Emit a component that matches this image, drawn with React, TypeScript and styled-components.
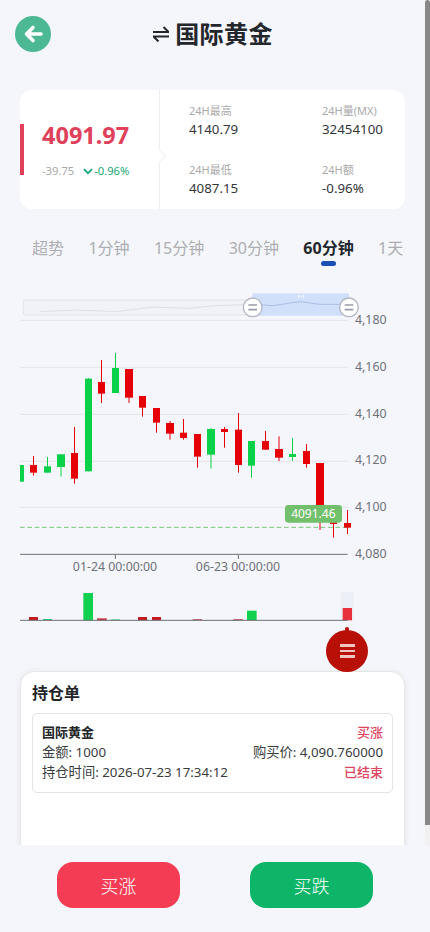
import React from "react";
import styled, { createGlobalStyle } from "styled-components";

const Global = createGlobalStyle`
  html, body { margin: 0; padding: 0; background: #f5f6fb; }
  * { box-sizing: border-box; }
  #root { width: 430px; height: 932px; overflow: hidden; }
`;

const Shell = styled.div`
  position: relative;
  width: 430px;
  height: 932px;
  overflow: hidden;
  background: #f5f6fb;
  color: #23262b;
  font-family: "Noto Sans", "Noto Sans CJK SC", sans-serif;
`;
const Page = styled.main`
  width: 425px;
  display: flex;
  flex-direction: column;
`;
const Header = styled.header`
  position: relative;
  height: 68px;
  margin-bottom: 22px;
  display: flex;
  justify-content: center;
  align-items: center;
`;
const BackButton = styled.button`
  position: absolute;
  left: 15px;
  top: 16px;
  width: 36px;
  height: 36px;
  padding: 0;
  border: 0;
  border-radius: 50%;
  background: #4cb894;
  display: flex;
  align-items: center;
  justify-content: center;
`;
const Title = styled.h1`
  margin: 0 0 0 1px;
  display: flex;
  align-items: center;
  gap: 6px;
  font-size: 24px;
  letter-spacing: 0.4px;
  line-height: 36px;
  font-weight: 700;
  color: #23262b;
`;
const PriceCard = styled.section`
  margin: 0 20px;
  height: 119px;
  background: #fff;
  border-radius: 12px;
  display: flex;
  overflow: hidden;
`;
const PricePane = styled.div`
  position: relative;
  width: 140px;
  flex: none;
  border-right: 1px solid #eeeeee;
  padding: 28px 0 0 22px;
  &::before {
    content: "";
    position: absolute;
    left: 0;
    top: 34px;
    width: 4px;
    height: 51px;
    background: #e0405a;
  }
  &::after {
    content: "";
    position: absolute;
    right: -5px;
    top: 61px;
    width: 9px;
    height: 9px;
    background: #fff;
    transform: rotate(45deg);
    border-top: 1px solid #f2f2f2;
    border-right: 1px solid #f2f2f2;
  }
`;
const BigPrice = styled.div`
  font-size: 23.5px;
  line-height: 34px;
  font-weight: 700;
  color: #e0405a;
`;
const ChangeRow = styled.div`
  margin-top: 11px;
  display: flex;
  align-items: center;
  font-size: 11.2px;
  line-height: 16px;
`;
const ChangeValue = styled.span`
  color: #aaaaaa;
  margin-right: 9px;
`;
const ChangePct = styled.span`
  display: flex;
  align-items: center;
  gap: 1px;
  color: #15a878;
`;
const StatsGrid = styled.div`
  flex: 1;
  display: grid;
  grid-template-columns: 133px 1fr;
  grid-auto-rows: 59px;
  padding: 12px 0 0 29px;
  overflow: hidden;
`;
const Stat = styled.div`
  display: flex;
  flex-direction: column;
`;
const StatLabel = styled.span`
  font-size: 11px;
  line-height: 18px;
  color: #aaaaaa;
`;
const StatValue = styled.span`
  font-size: 13.3px;
  line-height: 18px;
  color: #34363a;
`;
const Tabs = styled.nav`
  margin-top: 26px;
  padding-left: 32px;
  display: flex;
  gap: 24.4px;
  white-space: nowrap;
`;
const Tab = styled.span<{ $active?: boolean }>`
  position: relative;
  font-size: 16px;
  line-height: 26px;
  font-weight: ${(p) => (p.$active ? 700 : 400)};
  color: ${(p) => (p.$active ? "#23262b" : "#aeaeb2")};
  ${(p) =>
    p.$active
      ? `&::after {
    content: "";
    position: absolute;
    left: 18px;
    bottom: -5px;
    width: 15px;
    height: 5px;
    border-radius: 3px;
    background: #1a4fb5;
  }`
      : ""}
`;
const ChartSvg = styled.svg`
  display: block;
  width: 425px;
  height: 340px;
  margin-top: 24px;
  flex: none;
`;
const AxisText = styled.text`
  font-family: "Noto Sans", sans-serif;
  font-size: 37px;
  fill: #6e7079;
`;
const TagText = styled.text`
  font-family: "Noto Sans", sans-serif;
  font-size: 36px;
  fill: #ffffff;
`;
const MenuFab = styled.button`
  position: absolute;
  left: 326px;
  top: 630px;
  width: 42px;
  height: 42px;
  padding: 0;
  border: 0;
  border-radius: 50%;
  background: #b80f06;
  display: flex;
  flex-direction: column;
  align-items: center;
  justify-content: center;
  gap: 3px;
  z-index: 2;
  &::before {
    content: "";
    position: absolute;
    top: -3px;
    left: 19px;
    width: 4px;
    height: 6px;
    background: #b80f06;
    border-radius: 2px 2px 0 0;
  }
`;
const MenuLine = styled.i`
  display: block;
  width: 15px;
  height: 2.5px;
  background: #f4c4c0;
`;
const HoldingsCard = styled.section`
  margin: 46px 20px 0;
  height: 240px;
  background: #fff;
  border: 1px solid #e6e6e8;
  border-radius: 14px;
  box-shadow: 0 1px 6px rgba(0, 0, 0, 0.08);
  padding: 9px 11px;
`;
const HoldingsTitle = styled.h2`
  margin: 0 0 8px;
  font-size: 16px;
  line-height: 24px;
  font-weight: 700;
  color: #222428;
`;
const HoldingItem = styled.article`
  height: 80px;
  border: 1px solid #e3e3e6;
  border-radius: 5px;
  padding: 8px 9px;
`;
const HoldingRow = styled.div`
  display: flex;
  justify-content: space-between;
  font-size: 13.3px;
  line-height: 20px;
  color: #3a3c40;
`;
const Strong = styled.span`
  font-weight: 700;
  font-size: 13px;
  color: #222428;
`;
const RedText = styled.span`
  font-weight: 500;
  font-size: 13px;
  color: #dd4560;
`;
const BottomBar = styled.footer`
  position: absolute;
  left: 0;
  right: 0;
  bottom: 0;
  height: 87px;
  background: #f5f6fb;
  padding: 17px 57px 0;
  display: flex;
  justify-content: space-between;
  align-items: flex-start;
  z-index: 3;
`;
const TradeButton = styled.button<{ $color: string }>`
  width: 123px;
  height: 46px;
  border: 0;
  border-radius: 16px;
  background: ${(p) => p.$color};
  color: #fff;
  font-family: inherit;
  font-size: 18px;
  font-weight: 300;
`;
const ScrollTrack = styled.div`
  position: absolute;
  top: 0;
  right: 0;
  width: 5px;
  height: 100%;
  background: #f1f1f1;
`;
const ScrollThumb = styled.div`
  width: 5px;
  height: 825px;
  border-radius: 3px 3px 0 0;
  background: #888888;
`;

type C = [number, number, number, number, number, number, "r" | "g"];
// x1, x2, body top, body bottom, wick top, wick bottom (3x units)
const candles: C[] = [
  [60, 72, 540, 590, 540, 590, "g"],
  [90, 111, 540, 563, 513, 572, "r"],
  [132, 153, 544, 563, 516, 563, "g"],
  [171, 195, 508, 546, 508, 575, "g"],
  [213, 234, 504, 581, 426, 596, "r"],
  [255, 276, 281, 559, 279, 559, "g"],
  [294, 315, 291, 326, 225, 354, "r"],
  [336, 357, 249, 324, 204, 324, "g"],
  [375, 399, 252, 338, 252, 354, "r"],
  [417, 438, 333, 368, 333, 395, "r"],
  [459, 480, 369, 413, 369, 443, "r"],
  [498, 522, 414, 446, 408, 464, "r"],
  [540, 561, 443, 459, 402, 464, "r"],
  [582, 603, 447, 515, 447, 548, "r"],
  [621, 645, 432, 509, 429, 551, "g"],
  [663, 684, 432, 441, 426, 488, "r"],
  [705, 726, 434, 540, 384, 563, "r"],
  [744, 765, 468, 542, 468, 578, "g"],
  [786, 807, 468, 494, 438, 494, "r"],
  [825, 849, 492, 518, 454, 528, "r"],
  [867, 888, 507, 516, 459, 528, "g"],
  [909, 930, 498, 537, 477, 548, "r"],
  [948, 972, 534, 700, 534, 735, "r"],
  [990, 1011, 712, 717, 712, 758, "r"],
  [1032, 1053, 714, 728, 675, 747, "r"],
];
const volumes: [number, number, number, string][] = [
  [87, 114, 141, "#c41a1f"],
  [129, 156, 147, "#2fc468"],
  [250, 279, 69, "#0fd14f"],
  [291, 320, 145, "#c8323a"],
  [333, 360, 148, "#52d184"],
  [414, 441, 141, "#c41a1f"],
  [456, 483, 141, "#c41a1f"],
  [578, 606, 148, "#b02a30"],
  [700, 729, 148, "#b02a30"],
  [741, 770, 122, "#0fd14f"],
  [1028, 1056, 114, "#e8303c"],
];
const gridYs = [106, 247, 388, 529, 667];
const labels: [string, number][] = [
  ["4,180", 117],
  ["4,160", 257],
  ["4,140", 398],
  ["4,120", 538],
  ["4,100", 678],
  ["4,080", 819],
];
const RED = "#e50008";
const GREEN = "#0bd04a";

function Handle({ x }: { x: number }) {
  return (
    <g>
      <circle cx={x} cy={67} r={28} fill="#fff" stroke="#b4b7c2" strokeWidth={4} />
      <path d={`M${x - 13} 60H${x + 13}M${x - 13} 74H${x + 13}`} stroke="#9a9da8" strokeWidth={5} />
    </g>
  );
}

function Chart() {
  return (
    <ChartSvg viewBox="0 0 1275 1020" aria-label="K线图">
      <rect x={70} y={45} width={690} height={45} rx={6} fill="#f1f2f8" stroke="#e1e3ee" strokeWidth={3} />
      <path
        d="M120 80L160 78L230 75L350 80L460 66L560 70L650 62L760 58"
        fill="none"
        stroke="#dcdfe9"
        strokeWidth={3}
      />
      <rect x={758} y={25} width={289} height={67} fill="#d0dffa" />
      <path
        d="M758 58L820 62L870 54L900 50L960 58L1047 58"
        fill="none"
        stroke="#a9c0ea"
        strokeWidth={3}
      />
      <path d="M895 30v8M903 30v8M911 30v8" stroke="#fff" strokeWidth={3} />
      {gridYs.map((y) => (
        <line key={y} x1={60} x2={1043} y1={y} y2={y} stroke="#e2e3e9" strokeWidth={3} />
      ))}
      <Handle x={758} />
      <Handle x={1047} />
      <line x1={60} x2={1043} y1={727} y2={727} stroke="#7cc576" strokeWidth={3} strokeDasharray="14 8" />
      <line x1={60} x2={1043} y1={808} y2={808} stroke="#6e7079" strokeWidth={3} />
      <line x1={346} x2={346} y1={808} y2={822} stroke="#6e7079" strokeWidth={3} />
      <line x1={715} x2={715} y1={808} y2={822} stroke="#6e7079" strokeWidth={3} />
      {candles.map(([a, b, t, bt, wt, wb, c], i) => {
        const col = c === "r" ? RED : GREEN;
        const mid = i === 0 ? 66 : (a + b) / 2;
        return (
          <g key={a}>
            <line x1={mid} x2={mid} y1={wt} y2={wb} stroke={col} strokeWidth={3} />
            <rect x={a} y={t} width={b - a} height={bt - t} fill={col} />
          </g>
        );
      })}
      <rect x={855} y={660} width={171} height={53} rx={10} fill="#72bf6c" />
      <TagText x={940} y={699} textAnchor="middle">
        4091.46
      </TagText>
      {labels.map(([t, y]) => (
        <AxisText key={t} x={1065} y={y}>
          {t}
        </AxisText>
      ))}
      <AxisText x={345} y={859} textAnchor="middle">
        01-24 00:00:00
      </AxisText>
      <AxisText x={714} y={859} textAnchor="middle">
        06-23 00:00:00
      </AxisText>
      <rect x={1021} y={921} width={41} height={85} fill="#eceff6" />
      {volumes.map(([a, b, t, col]) => (
        <rect key={a} x={a} y={t + 855} width={b - a} height={1006 - t - 855} fill={col} />
      ))}
      <line x1={60} x2={1043} y1={1006} y2={1006} stroke="#6e7079" strokeWidth={3} />
    </ChartSvg>
  );
}

const tabs = ["超势", "1分钟", "15分钟", "30分钟", "60分钟", "1天"];

export default function App() {
  return (
    <Shell>
      <Global />
      <Page>
        <Header>
          <BackButton aria-label="返回">
            <svg width="22" height="22" viewBox="0 0 22 22" fill="none">
              <path
                d="M19 11H5M11 4.5L4.5 11L11 17.5"
                stroke="#fff"
                strokeWidth="3.6"
                strokeLinecap="round"
                strokeLinejoin="round"
              />
            </svg>
          </BackButton>
          <Title>
            <svg width="16" height="16" viewBox="0 0 16 16" fill="none">
              <path d="M0 6H15.5L10.5 1M16 10.5H0.5L5.5 15.5" stroke="#23262b" strokeWidth="2" />
            </svg>
            国际黄金
          </Title>
        </Header>
        <PriceCard>
          <PricePane>
            <BigPrice>4091.97</BigPrice>
            <ChangeRow>
              <ChangeValue>-39.75</ChangeValue>
              <ChangePct>
                <svg width="10" height="7" viewBox="0 0 10 7" fill="none">
                  <path d="M1 1.2L5 5.2L9 1.2" stroke="#15a878" strokeWidth="1.7" />
                </svg>
                -0.96%
              </ChangePct>
            </ChangeRow>
          </PricePane>
          <StatsGrid>
            <Stat>
              <StatLabel>24H最高</StatLabel>
              <StatValue>4140.79</StatValue>
            </Stat>
            <Stat>
              <StatLabel>24H量(MX)</StatLabel>
              <StatValue>32454100</StatValue>
            </Stat>
            <Stat>
              <StatLabel>24H最低</StatLabel>
              <StatValue>4087.15</StatValue>
            </Stat>
            <Stat>
              <StatLabel>24H额</StatLabel>
              <StatValue>-0.96%</StatValue>
            </Stat>
          </StatsGrid>
        </PriceCard>
        <Tabs>
          {tabs.map((t) => (
            <Tab key={t} $active={t === "60分钟"}>
              {t}
            </Tab>
          ))}
        </Tabs>
        <Chart />
        <HoldingsCard>
          <HoldingsTitle>持仓单</HoldingsTitle>
          <HoldingItem>
            <HoldingRow>
              <Strong>国际黄金</Strong>
              <RedText>买涨</RedText>
            </HoldingRow>
            <HoldingRow>
              <span>金额: 1000</span>
              <span>购买价: 4,090.760000</span>
            </HoldingRow>
            <HoldingRow>
              <span>持仓时间: 2026-07-23 17:34:12</span>
              <RedText>已结束</RedText>
            </HoldingRow>
          </HoldingItem>
        </HoldingsCard>
      </Page>
      <MenuFab aria-label="菜单">
        <MenuLine />
        <MenuLine />
        <MenuLine />
      </MenuFab>
      <ScrollTrack>
        <ScrollThumb />
      </ScrollTrack>
      <BottomBar>
        <TradeButton $color="#f53c55">买涨</TradeButton>
        <TradeButton $color="#0eb569">买跌</TradeButton>
      </BottomBar>
    </Shell>
  );
}
